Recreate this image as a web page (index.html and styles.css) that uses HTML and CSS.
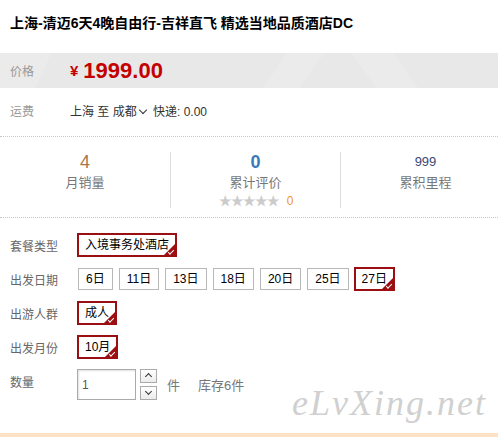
FILE: index.html
```
<!DOCTYPE html>
<html lang="zh-CN">
<head>
    <meta charset="UTF-8">
    <title>上海-清迈6天4晚自由行</title>
    <link rel="stylesheet" href="styles.css">
</head>
<body>
    <div class="detail">
        <h1 class="title">上海-清迈6天4晚自由行-吉祥直飞 精选当地品质酒店DC</h1>

        <div class="price-row">
            <span class="label">价格</span>
            <span class="price"><em>¥</em>1999.00</span>
        </div>

        <div class="freight-row">
            <span class="label">运费</span>
            <span class="freight">上海 至 成都<i class="arrow"></i> 快递: 0.00</span>
        </div>

        <div class="stats">
            <div class="stat">
                <span class="num sold">4</span>
                <span class="name">月销量</span>
            </div>
            <div class="stat">
                <span class="num rate">0</span>
                <span class="name">累计评价</span>
                <span class="stars">★★★★★<b>0</b></span>
            </div>
            <div class="stat">
                <span class="num miles">999</span>
                <span class="name">累积里程</span>
            </div>
        </div>

        <div class="options">
            <div class="opt-row">
                <span class="label">套餐类型</span>
                <div class="opt-list">
                    <span class="opt sel">入境事务处酒店</span>
                </div>
            </div>
            <div class="opt-row">
                <span class="label">出发日期</span>
                <div class="opt-list">
                    <span class="opt">6日</span>
                    <span class="opt">11日</span>
                    <span class="opt">13日</span>
                    <span class="opt">18日</span>
                    <span class="opt">20日</span>
                    <span class="opt">25日</span>
                    <span class="opt sel">27日</span>
                </div>
            </div>
            <div class="opt-row">
                <span class="label">出游人群</span>
                <div class="opt-list">
                    <span class="opt sel">成人</span>
                </div>
            </div>
            <div class="opt-row">
                <span class="label">出发月份</span>
                <div class="opt-list">
                    <span class="opt sel">10月</span>
                </div>
            </div>
            <div class="qty-row">
                <span class="label">数量</span>
                <div class="qty-input">1</div>
                <div class="spin">
                    <span class="spin-btn up"></span>
                    <span class="spin-btn down"></span>
                </div>
                <span class="unit">件</span>
                <span class="stock">库存6件</span>
            </div>
        </div>

        <div class="watermark">eLvXing.net</div>
        <div class="bottom-bar"></div>
    </div>
</body>
</html>
```
FILE: styles.css
```
body {
    margin: 0;
    padding: 0;
    width: 498px;
    height: 437px;
    overflow: hidden;
    background: #fff;
    font-family: "Liberation Sans", "Noto Sans CJK SC", sans-serif;
    font-size: 12px;
    color: #333;
}

.detail {
    position: relative;
    height: 437px;
}

.title {
    margin: 0;
    padding: 13px 10px 0;
    font-size: 14px;
    line-height: 20px;
    font-weight: bold;
    color: #000;
}

.label {
    display: inline-block;
    width: 60px;
    color: #999;
}

.price-row {
    margin-top: 20px;
    height: 35px;
    display: flex;
    align-items: center;
    padding-left: 10px;
    background: #e8e8e8;
    background-image:
        linear-gradient(125deg, transparent 0 55%, rgba(255,255,255,0.15) 55% 62%, transparent 62%),
        linear-gradient(55deg, transparent 0 72%, rgba(255,255,255,0.15) 72% 80%, transparent 80%),
        linear-gradient(115deg, rgba(255,255,255,0.12) 0 10%, transparent 10%);
}

.price {
    color: #c40000;
    font-size: 22px;
    font-weight: bold;
}

.price em {
    font-style: normal;
    font-size: 15px;
    margin-right: 5px;
    vertical-align: 2px;
}

.freight-row {
    margin-top: 14px;
    padding-left: 10px;
    line-height: 20px;
    display: flex;
}

.freight {
    color: #333;
}

.arrow {
    display: inline-block;
    width: 5px;
    height: 5px;
    border-right: 1px solid #333;
    border-bottom: 1px solid #333;
    transform: rotate(45deg);
    margin: 0 4px 3px 3px;
}

.stats {
    margin-top: 14px;
    border-top: 1px dotted #c8c8c8;
    border-bottom: 1px dotted #c8c8c8;
    display: grid;
    grid-template-columns: 170px 170px 170px;
    height: 80px;
}

.stat {
    margin: 15px 0 10px;
    display: flex;
    flex-direction: column;
    align-items: center;
    border-left: 1px solid #ddd;
}

.stat:first-child {
    border-left: none;
}

.num {
    font-size: 18px;
    line-height: 20px;
}

.num.sold {
    color: #a9764b;
}

.num.rate {
    color: #3a7ab9;
    font-weight: bold;
}

.num.miles {
    font-size: 13px;
    color: #3b4a7a;
}

.name {
    color: #777;
    font-size: 13px;
    line-height: 22px;
}

.stars {
    color: #ccc;
    font-size: 13px;
    line-height: 14px;
    letter-spacing: -1px;
}

.stars b {
    font-weight: normal;
    color: #f39a1e;
    margin-left: 8px;
    font-size: 12px;
}

.options {
    padding: 15px 0 0 10px;
}

.opt-row {
    display: flex;
    align-items: center;
    height: 24px;
    margin-bottom: 10px;
}

.opt-row .label,
.qty-row .label {
    width: 67px;
    color: #666;
}

.opt-list {
    display: flex;
    gap: 4px;
}

.opt {
    position: relative;
    margin: 1px;
    padding: 0 7px;
    border: 1px solid #b8b8b8;
    line-height: 20px;
    color: #000;
    background: #fff;
}

.opt.sel {
    margin: 0;
    padding: 0 6px;
    border: 2px solid #9b0f12;
}

.opt.sel::before {
    content: "";
    position: absolute;
    right: 0;
    bottom: 0;
    width: 0;
    height: 0;
    border-style: solid;
    border-width: 0 0 11px 11px;
    border-color: transparent transparent #9b0f12 transparent;
}

.opt.sel::after {
    content: "";
    position: absolute;
    right: 1px;
    bottom: 2px;
    width: 5px;
    height: 2px;
    border-left: 1px solid #fff;
    border-bottom: 1px solid #fff;
    transform: rotate(-45deg);
}

.qty-row {
    display: flex;
    align-items: center;
    margin-top: 1px;
    position: relative;
}

.qty-row .label {
    align-self: flex-start;
    margin-top: 4px;
}

.qty-input {
    width: 53px;
    height: 29px;
    padding-left: 4px;
    border: 1px solid #aaa;
    box-shadow: inset 1px 1px 2px #e0e0e0;
    line-height: 31px;
    color: #555;
    font-size: 12px;
}

.spin {
    display: flex;
    flex-direction: column;
    gap: 3px;
    margin-left: 4px;
}

.spin-btn {
    position: relative;
    width: 15px;
    height: 12px;
    border: 1px solid #aaa;
    background: linear-gradient(#fff, #ececec);
}

.spin-btn::after {
    content: "";
    position: absolute;
    left: 5px;
    width: 4px;
    height: 4px;
    border-left: 1.5px solid #333;
    border-top: 1.5px solid #333;
}

.spin-btn.up::after {
    top: 4px;
    transform: rotate(45deg);
}

.spin-btn.down::after {
    top: 2px;
    transform: rotate(-135deg);
}

.unit {
    margin-left: 10px;
    color: #777;
    font-size: 13px;
}

.stock {
    margin-left: 18px;
    color: #777;
    font-size: 13px;
}

.watermark {
    position: absolute;
    left: 292px;
    top: 382px;
    font-family: "Liberation Serif", serif;
    font-style: italic;
    font-size: 36px;
    letter-spacing: 2px;
    color: #d0d0d0;
}

.bottom-bar {
    position: absolute;
    left: 0;
    right: 0;
    bottom: 0;
    height: 4px;
    background: #fde2c5;
}
```
